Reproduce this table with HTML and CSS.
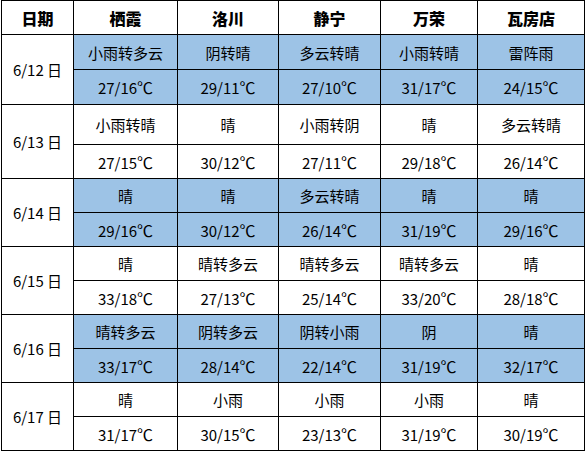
FILE: index.html
```html
<!DOCTYPE html>
<html lang="zh">
<head>
<meta charset="utf-8">
<link rel="stylesheet" href="styles.css">
</head>
<body>
<div class="wrap">
<table class="wx">
<colgroup>
<col class="c0"><col class="c1"><col class="c2"><col class="c3"><col class="c4"><col class="c5">
</colgroup>
<thead>
<tr class="hd"><th>日期</th><th>栖霞</th><th>洛川</th><th>静宁</th><th>万荣</th><th>瓦房店</th></tr>
</thead>
<tbody>
<tr class="r35 blue"><td class="date" rowspan="2">6/12 日</td><td>小雨转多云</td><td>阴转晴</td><td>多云转晴</td><td>小雨转晴</td><td>雷阵雨</td></tr>
<tr class="r35 blue"><td>27/16<span class="deg">℃</span></td><td>29/11<span class="deg">℃</span></td><td>27/10<span class="deg">℃</span></td><td>31/17<span class="deg">℃</span></td><td>24/15<span class="deg">℃</span></td></tr>
<tr class="r40"><td class="date" rowspan="2">6/13 日</td><td>小雨转晴</td><td>晴</td><td>小雨转阴</td><td>晴</td><td>多云转晴</td></tr>
<tr class="r34"><td>27/15<span class="deg">℃</span></td><td>30/12<span class="deg">℃</span></td><td>27/11<span class="deg">℃</span></td><td>29/18<span class="deg">℃</span></td><td>26/14<span class="deg">℃</span></td></tr>
<tr class="r34 blue"><td class="date" rowspan="2">6/14 日</td><td>晴</td><td>晴</td><td>多云转晴</td><td>晴</td><td>晴</td></tr>
<tr class="r34 blue"><td>29/16<span class="deg">℃</span></td><td>30/12<span class="deg">℃</span></td><td>26/14<span class="deg">℃</span></td><td>31/19<span class="deg">℃</span></td><td>29/16<span class="deg">℃</span></td></tr>
<tr class="r34"><td class="date" rowspan="2">6/15 日</td><td>晴</td><td>晴转多云</td><td>晴转多云</td><td>晴转多云</td><td>晴</td></tr>
<tr class="r34"><td>33/18<span class="deg">℃</span></td><td>27/13<span class="deg">℃</span></td><td>25/14<span class="deg">℃</span></td><td>33/20<span class="deg">℃</span></td><td>28/18<span class="deg">℃</span></td></tr>
<tr class="r34 blue"><td class="date" rowspan="2">6/16 日</td><td>晴转多云</td><td>阴转多云</td><td>阴转小雨</td><td>阴</td><td>晴</td></tr>
<tr class="r34 blue"><td>33/17<span class="deg">℃</span></td><td>28/14<span class="deg">℃</span></td><td>22/14<span class="deg">℃</span></td><td>31/19<span class="deg">℃</span></td><td>32/17<span class="deg">℃</span></td></tr>
<tr class="r34"><td class="date" rowspan="2">6/17 日</td><td>晴</td><td>小雨</td><td>小雨</td><td>小雨</td><td>晴</td></tr>
<tr class="r34"><td>31/17<span class="deg">℃</span></td><td>30/15<span class="deg">℃</span></td><td>23/13<span class="deg">℃</span></td><td>31/19<span class="deg">℃</span></td><td>30/19<span class="deg">℃</span></td></tr>
</tbody>
</table>
</div>
</body>
</html>
```
FILE: styles.css
```css
html, body {
  margin: 0;
  padding: 0;
  background: #ffffff;
}
.wrap {
  padding: 0 0 0 1px;
}
.wx {
  border-collapse: collapse;
  table-layout: fixed;
  width: 584px;
  font-family: "Noto Sans CJK SC", "Noto Sans", sans-serif;
  font-size: 15px;
  color: #000;
}
.c0 { width: 72px; }
.c1 { width: 104px; }
.c2 { width: 101px; }
.c3 { width: 102px; }
.c4 { width: 97px; }
.c5 { width: 107px; }
.wx th, .wx td {
  border: 1px solid #000;
  padding: 0;
  text-align: center;
  vertical-align: middle;
  line-height: 1;
  white-space: nowrap;
}
.wx th {
  font-weight: 900;
  font-size: 16px;
}
.hd { height: 34px; }
.r35 { height: 35px; }
.r40 { height: 40px; }
.r34 { height: 34px; }
.blue td { background: #9dc3e6; }
.blue td.date { background: #ffffff; }
.date { font-size: 15px; }
.deg {
  font-family: "Noto Sans CJK SC", sans-serif;
  font-feature-settings: "fwid" 1;
  font-size: 16px;
}
```
